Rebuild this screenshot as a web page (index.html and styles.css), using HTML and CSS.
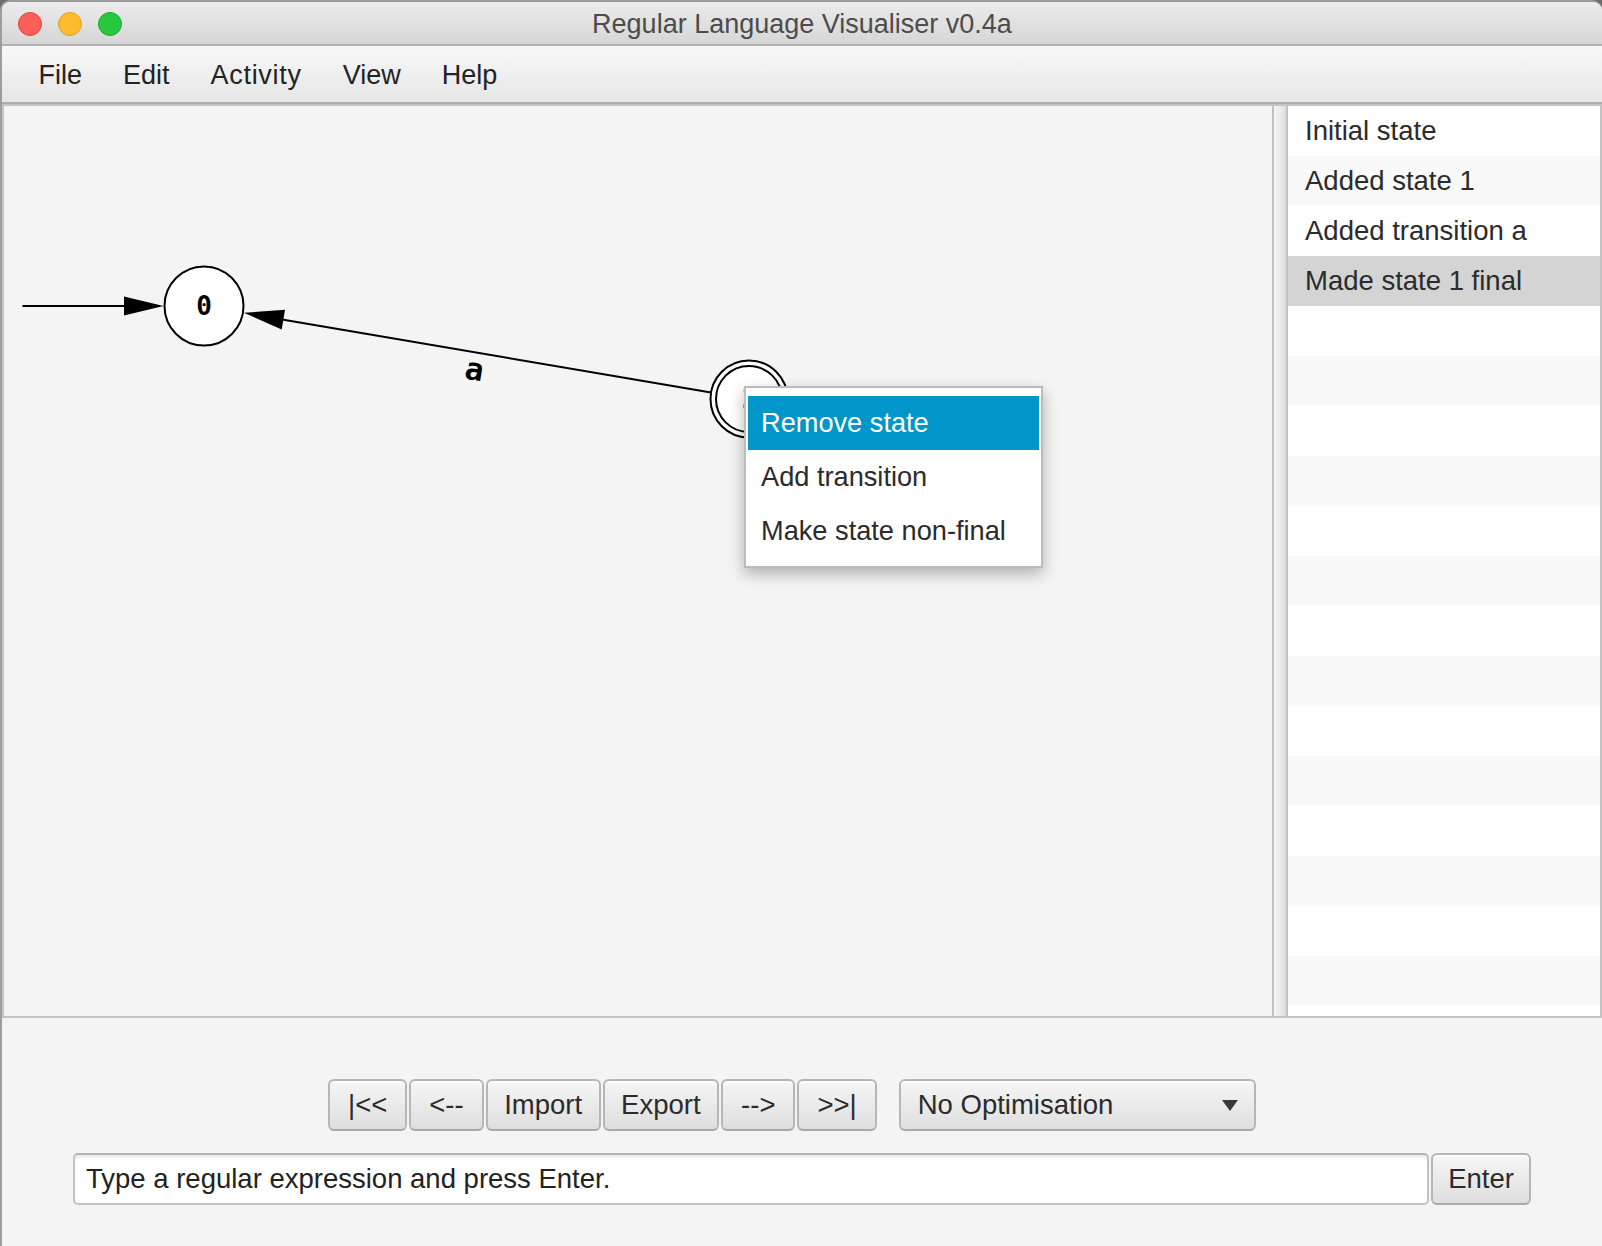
FILE: index.html
```html
<!DOCTYPE html>
<html lang="en">
<head>
<meta charset="utf-8">
<title>Regular Language Visualiser v0.4a</title>
<link rel="stylesheet" href="styles.css">
</head>
<body>
<div class="window">
  <header class="titlebar">
    <div class="lights">
      <span class="light red"></span>
      <span class="light yellow"></span>
      <span class="light green"></span>
    </div>
    <div class="title">Regular Language Visualiser v0.4a</div>
    <div></div>
  </header>

  <nav class="menubar">
    <span class="menu-item">File</span>
    <span class="menu-item">Edit</span>
    <span class="menu-item wide">Activity</span>
    <span class="menu-item">View</span>
    <span class="menu-item">Help</span>
  </nav>

  <main class="split">
    <section class="canvas">
      <svg class="diagram" width="1268" height="910" viewBox="0 0 1268 910" xmlns="http://www.w3.org/2000/svg">
        <!-- initial arrow -->
        <line x1="18.5" y1="200" x2="122" y2="200" stroke="#000" stroke-width="2"/>
        <polygon points="120,190.5 159.5,200 120,209.5" fill="#000"/>
        <!-- transition 1 -> 0 -->
        <line x1="707" y1="286.5" x2="278" y2="213.4" stroke="#000" stroke-width="2"/>
        <polygon points="239.9,206.8 277.7,223.4 281.0,203.7" fill="#000"/>
        <text class="edge-label" x="470" y="274" text-anchor="middle" transform="rotate(9.7 470 266)">a</text>
        <!-- state 0 -->
        <circle cx="200" cy="200" r="39.5" fill="#fff" stroke="#000" stroke-width="2"/>
        <text class="state-label" x="200" y="208.5" text-anchor="middle">0</text>
        <!-- state 1 (final) -->
        <circle cx="745" cy="293" r="38.5" fill="#fff" stroke="#000" stroke-width="2"/>
        <circle cx="745" cy="293" r="33" fill="#fff" stroke="#000" stroke-width="2"/>
        <text class="state-label" x="745" y="301.5" text-anchor="middle">1</text>
      </svg>

      <div class="context-menu">
        <div class="cm-item active">Remove state</div>
        <div class="cm-item">Add transition</div>
        <div class="cm-item">Make state non-final</div>
      </div>
    </section>

    <div class="divider"></div>

    <ul class="history">
      <li class="row">Initial state</li>
      <li class="row odd">Added state 1</li>
      <li class="row">Added transition a</li>
      <li class="row selected">Made state 1 final</li>
      <li class="row"></li>
      <li class="row odd"></li>
      <li class="row"></li>
      <li class="row odd"></li>
      <li class="row"></li>
      <li class="row odd"></li>
      <li class="row"></li>
      <li class="row odd"></li>
      <li class="row"></li>
      <li class="row odd"></li>
      <li class="row"></li>
      <li class="row odd"></li>
      <li class="row"></li>
      <li class="row odd"></li>
      <li class="row"></li>
    </ul>
  </main>

  <footer class="controls">
    <div class="nav-row">
      <button class="btn nav">|&lt;&lt;</button>
      <button class="btn nav">&lt;--</button>
      <button class="btn">Import</button>
      <button class="btn">Export</button>
      <button class="btn nav">--&gt;</button>
      <button class="btn nav">&gt;&gt;|</button>
      <div class="btn combo">
        <span>No Optimisation</span>
        <span class="combo-arrow"></span>
      </div>
    </div>
    <div class="input-row">
      <div class="field">Type a regular expression and press Enter.</div>
      <button class="btn enter">Enter</button>
    </div>
  </footer>
</div>
</body>
</html>
```

FILE: styles.css
```css
* {
  box-sizing: border-box;
}

html,
body {
  margin: 0;
  padding: 0;
}

body {
  width: 1602px;
  height: 1246px;
  overflow: hidden;
  background: #6e6e6e;
  font-family: "Liberation Sans", Arial, sans-serif;
  font-size: 27.5px;
  color: #2b2b2b;
}

.window {
  width: 1602px;
  height: 1246px;
  display: flex;
  flex-direction: column;
  background: #f4f4f4;
  border-left: 2px solid #9d9d9d;
  border-top: 2px solid #9a9a9a;
  border-radius: 10px 10px 0 0;
  overflow: hidden;
}

/* ---------- title bar ---------- */
.titlebar {
  flex: none;
  height: 44px;
  display: grid;
  grid-template-columns: 1fr auto 1fr;
  align-items: center;
  padding-top: 2px;
  background: linear-gradient(#ececec, #d6d6d6);
  border-bottom: 2px solid #b3b3b3;
}

.lights {
  display: flex;
  gap: 16px;
  padding-left: 16px;
}

.light {
  width: 24px;
  height: 24px;
  border-radius: 50%;
}

.red {
  background: #fc5f57;
  border: 1px solid #df453f;
}

.yellow {
  background: #fdbc2e;
  border: 1px solid #de9f22;
}

.green {
  background: #29c73f;
  border: 1px solid #1aab2a;
}

.title {
  color: #4c4c4c;
  font-size: 27px;
  white-space: nowrap;
}

/* ---------- menu bar ---------- */
.menubar {
  flex: none;
  height: 58px;
  display: flex;
  align-items: center;
  padding-left: 16px;
  padding-top: 2px;
  background: linear-gradient(#f8f8f8, #e6e6e6);
  border-bottom: 2px solid #adadad;
}

.menu-item {
  padding: 0 20.5px;
  font-size: 27px;
  color: #232323;
}

.menu-item.wide {
  letter-spacing: 0.7px;
}

/* ---------- split area ---------- */
.split {
  flex: none;
  height: 914px;
  display: flex;
  border: 2px solid #c4c4c4;
}

.canvas {
  position: relative;
  width: 1268px;
  flex: none;
  background: #f4f4f4;
}

.diagram {
  display: block;
}

.state-label {
  font-family: "DejaVu Sans Mono", monospace;
  font-size: 26px;
  font-weight: bold;
  fill: #000;
}

.edge-label {
  font-family: "DejaVu Sans Mono", monospace;
  font-size: 31px;
  font-weight: bold;
  fill: #000;
}

.context-menu {
  position: absolute;
  left: 740px;
  top: 280px;
  width: 299px;
  padding: 8px 2px;
  background: #fff;
  border: 2px solid #bcbcbc;
  box-shadow: 0 6px 14px rgba(0, 0, 0, 0.28);
}

.cm-item {
  height: 54px;
  display: flex;
  align-items: center;
  padding-left: 13px;
  font-size: 27.2px;
  color: #2b2b2b;
}

.cm-item.active {
  background: #0096c9;
  color: #fff;
}

.divider {
  flex: none;
  width: 16px;
  border-left: 2px solid #c2c2c2;
  border-right: 2px solid #c2c2c2;
  background: linear-gradient(to right, #f4f4f4, #ececec 50%, #dcdcdc);
}

.history {
  flex: none;
  width: 312px;
  margin: 0;
  padding: 0;
  list-style: none;
  overflow: hidden;
  background: #fff;
}

.row {
  height: 50px;
  display: flex;
  align-items: center;
  padding-left: 17px;
  background: #fff;
  color: #2b2b2b;
  white-space: nowrap;
}

.row.odd {
  background: #f9f9f9;
}

.row.selected {
  background: #d4d4d4;
}

/* ---------- bottom controls ---------- */
.controls {
  flex: 1;
  display: flex;
  flex-direction: column;
  gap: 22px;
  padding-top: 61px;
}

.nav-row {
  display: flex;
  gap: 2px;
  padding-left: 326px;
}

.btn {
  margin: 0;
  height: 52px;
  display: flex;
  align-items: center;
  justify-content: center;
  padding: 0 16.5px;
  border: 2px solid #b6b6b6;
  border-bottom-color: #a9a9a9;
  border-radius: 6px;
  background: linear-gradient(#f6f6f6, #dedede);
  box-shadow: inset 0 2px 0 #fdfdfd;
  font: inherit;
  color: #2b2b2b;
  white-space: nowrap;
}

.btn.nav {
  padding: 0 18px;
}

.combo {
  width: 357px;
  margin-left: 20px;
  justify-content: space-between;
  padding: 0 16px 0 17px;
}

.combo-arrow {
  width: 0;
  height: 0;
  border-left: 8px solid transparent;
  border-right: 8px solid transparent;
  border-top: 11px solid #3a3a3a;
}

.input-row {
  display: flex;
  justify-content: center;
  gap: 2px;
}

.field {
  width: 1356px;
  height: 52px;
  display: flex;
  align-items: center;
  padding: 0 11px;
  background: #fff;
  border: 2px solid #c2c2c2;
  border-top-color: #b4b4b4;
  border-radius: 5px;
  box-shadow: inset 0 5px 4px -3px rgba(0, 0, 0, 0.10);
  color: #222;
  white-space: nowrap;
}

.btn.enter {
  width: 100px;
  padding: 0;
}
```
